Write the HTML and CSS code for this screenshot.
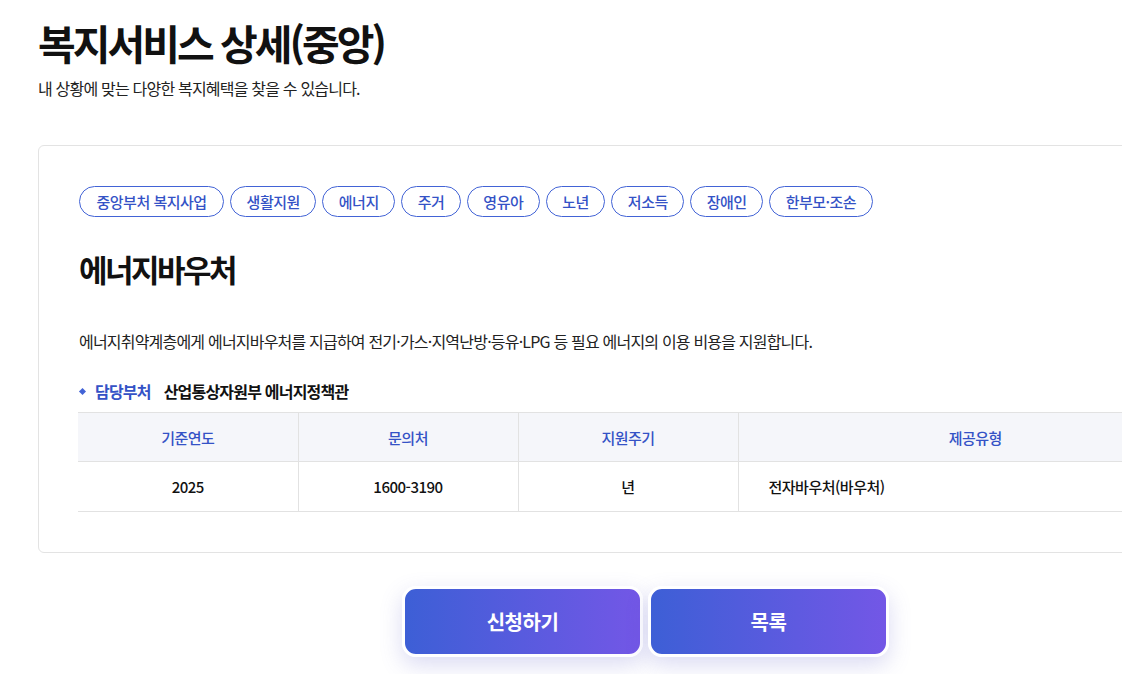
FILE: index.html
```html
<!DOCTYPE html>
<html lang="ko">
<head>
<meta charset="utf-8">
<title>복지서비스 상세(중앙)</title>
<link rel="stylesheet" href="styles.css">
</head>
<body>
<div class="page">
  <header class="page-head">
    <h1 class="page-title">복지서비스 상세(중앙)</h1>
    <p class="page-sub">내 상황에 맞는 다양한 복지혜택을 찾을 수 있습니다.</p>
  </header>

  <section class="card">
    <ul class="tags">
      <li class="tag">중앙부처 복지사업</li>
      <li class="tag">생활지원</li>
      <li class="tag">에너지</li>
      <li class="tag">주거</li>
      <li class="tag">영유아</li>
      <li class="tag">노년</li>
      <li class="tag">저소득</li>
      <li class="tag">장애인</li>
      <li class="tag">한부모·조손</li>
    </ul>
    <h2 class="svc-title">에너지바우처</h2>
    <p class="svc-desc">에너지취약계층에게 에너지바우처를 지급하여 전기·가스·지역난방·등유·LPG 등 필요 에너지의 이용 비용을 지원합니다.</p>
    <div class="dept">
      <span class="dept-label">담당부처</span>
      <span class="dept-name">산업통상자원부 에너지정책관</span>
    </div>
    <table class="info">
      <colgroup>
        <col class="col-fixed"><col class="col-fixed"><col class="col-fixed"><col>
      </colgroup>
      <thead>
        <tr><th>기준연도</th><th>문의처</th><th>지원주기</th><th>제공유형</th></tr>
      </thead>
      <tbody>
        <tr><td>2025</td><td>1600-3190</td><td>년</td><td class="left">전자바우처(바우처)</td></tr>
      </tbody>
    </table>
  </section>

  <div class="actions">
    <button class="btn">신청하기</button>
    <button class="btn">목록</button>
  </div>
</div>
</body>
</html>
```

FILE: styles.css
```css
html {
  overflow: hidden;
}
html, body {
  margin: 0;
  padding: 0;
  background: #ffffff;
}
body {
  font-family: "Noto Sans CJK KR", "Noto Sans", sans-serif;
  color: #111;
}
.page {
  width: 1215px;
  padding: 0 0 60px 38px;
}
.page-head {
  padding-top: 13px;
}
.page-title {
  margin: 0;
  font-size: 41px;
  font-weight: 700;
  letter-spacing: -3px;
  line-height: 58px;
  color: #111;
}
.page-sub {
  margin: 6px 0 0;
  font-size: 16px;
  letter-spacing: -0.8px;
  line-height: 22px;
  color: #222;
}
.card {
  margin-top: 46px;
  border: 1px solid #e3e3e3;
  border-radius: 6px;
  padding: 40px 40px 40px;
}
.tags {
  list-style: none;
  margin: 0;
  padding: 0;
  display: flex;
  gap: 6px;
}
.tag {
  height: 29px;
  border: 1px solid #4263d6;
  border-radius: 16px;
  padding: 0 15.5px;
  display: flex;
  align-items: center;
  font-size: 15px;
  font-weight: 500;
  letter-spacing: -0.5px;
  color: #3452c6;
}
.tag:first-child {
  padding: 0 16.5px;
}
.svc-title {
  margin: 32px 0 0;
  font-size: 31px;
  font-weight: 700;
  letter-spacing: -2.5px;
  line-height: 40px;
  color: #111;
}
.svc-desc {
  margin: 40px 0 0;
  font-size: 16px;
  letter-spacing: -0.8px;
  line-height: 24px;
  color: #222;
}
.dept {
  margin-top: 26px;
  display: flex;
  align-items: center;
  font-size: 16px;
  font-weight: 700;
  letter-spacing: -0.8px;
  line-height: 24px;
}
.dept-label {
  position: relative;
  padding-left: 16px;
  color: #3452c6;
  margin-right: 13px;
}
.dept-label::before {
  content: "";
  position: absolute;
  left: 1px;
  top: 10px;
  width: 5px;
  height: 5px;
  background: #4263d6;
  transform: rotate(45deg);
}
.dept-name {
  color: #111;
}
.info {
  margin-top: 9px;
  margin-left: -1px;
  width: calc(100% + 1px);
  border-collapse: collapse;
  table-layout: fixed;
  font-size: 15px;
  letter-spacing: -0.5px;
}
.col-fixed { width: 220px; }
.info th, .info td {
  padding: 0;
  border-top: 1px solid #e2e2e2;
  border-bottom: 1px solid #e2e2e2;
  border-left: 1px solid #e2e2e2;
  text-align: center;
}
.info th:first-child, .info td:first-child {
  border-left: none;
}
.info th {
  height: 48px;
  background: #f5f6fa;
  color: #3452c6;
  font-weight: 500;
}
.info td {
  height: 49px;
  color: #111;
  font-weight: 500;
}
.info td.left {
  text-align: left;
  padding-left: 30px;
}
.actions {
  margin-top: 33px;
  display: flex;
  justify-content: center;
  gap: 5px;
}
.btn {
  width: 241px;
  height: 71px;
  border: 3px solid #ffffff;
  border-radius: 14px;
  background: linear-gradient(90deg, #3d5fd6 0%, #7357e6 100%);
  box-shadow: 0 8px 22px rgba(90, 90, 200, 0.22);
  color: #ffffff;
  font-family: "Noto Sans CJK KR", "Noto Sans", sans-serif;
  font-size: 20px;
  font-weight: 700;
  letter-spacing: -0.5px;
  cursor: pointer;
}
```
